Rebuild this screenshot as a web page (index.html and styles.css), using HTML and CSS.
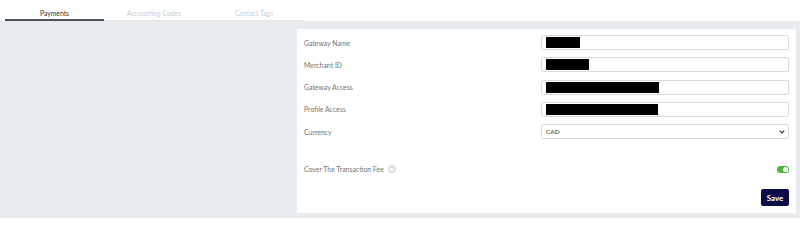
FILE: index.html
```html
<!DOCTYPE html>
<html lang="en">
<head>
  <meta charset="UTF-8">
  <meta name="viewport" content="width=device-width, initial-scale=1.0">
  <title>Payments</title>
  <link rel="stylesheet" href="styles.css">
</head>
<body>
  <!-- Tabs -->
  <div class="tabs">
    <div class="tab active">Payments</div>
    <div class="tab">Accounting Codes</div>
    <div class="tab">Contact Tags</div>
  </div>

  <!-- Content -->
  <div class="content">
    <div class="side"></div>
    <div class="card">
      <div class="row">
        <label>Gateway Name</label>
        <div class="field"><span class="redact r1"></span></div>
      </div>
      <div class="row">
        <label>Merchant ID</label>
        <div class="field"><span class="redact r2"></span></div>
      </div>
      <div class="row">
        <label>Gateway Access</label>
        <div class="field"><span class="redact r3"></span></div>
      </div>
      <div class="row">
        <label>Profile Access</label>
        <div class="field"><span class="redact r4"></span></div>
      </div>
      <div class="row">
        <label>Currency</label>
        <div class="field select">
          <span class="value">CAD</span>
          <svg class="chevron" width="6" height="4" viewBox="0 0 6 4"><path d="M0.7 0.7 L3 3 L5.3 0.7" fill="none" stroke="#333" stroke-width="1.2"/></svg>
        </div>
      </div>
      <div class="row toggle-row">
        <label>Cover The Transaction Fee
          <svg class="help" width="8" height="8" viewBox="0 0 8 8"><circle cx="4" cy="4" r="3.4" fill="none" stroke="#aaa" stroke-width="0.7"/><path d="M2.9 3.1 C2.9 2.3 5.1 2.3 5.1 3.1 C5.1 3.8 4 3.8 4 4.7" fill="none" stroke="#aaa" stroke-width="0.7"/><circle cx="4" cy="5.8" r="0.4" fill="#aaa"/></svg>
        </label>
        <div class="switch"><span class="knob"></span></div>
      </div>
      <div class="actions">
        <button class="save">Save</button>
      </div>
    </div>
  </div>
</body>
</html>
```

FILE: styles.css
```css
/* General */
body {
  margin: 0;
  font-family: 'Lato', 'Liberation Sans', sans-serif;
  background: #ffffff;
  color: #333;
  height: 226px;
  overflow: hidden;
}

/* Tabs */
.tabs {
  display: flex;
  width: 299px;
  margin-left: 5px;
  border-bottom: 1px solid #e3e5e8;
  height: 20px;
}

.tab {
  flex: 1;
  text-align: center;
  font-size: 6.8px;
  line-height: 26px;
  color: #c9cdd2;
}

.tab.active {
  color: #333;
  border-bottom: 2px solid #4b5158;
  margin-bottom: -1px;
  flex: 0 0 99px;
  box-sizing: border-box;
}

/* Content */
.content {
  display: flex;
  background: #e9ecef;
  padding: 8px 4px 5px 0;
  height: 184px;
}

.side {
  width: 297px;
  flex-shrink: 0;
}

.card {
  flex: 1;
  background: #ffffff;
  padding: 6px 7px 6px 7px;
  display: flex;
  flex-direction: column;
  gap: 7.3px;
}

.row {
  display: flex;
  align-items: center;
  height: 15px;
}

.row label {
  width: 237px;
  flex-shrink: 0;
  font-size: 6.9px;
  font-weight: 400;
  color: #747474;
  display: flex;
  align-items: center;
  gap: 4px;
}

.field {
  flex: 1;
  height: 15px;
  box-sizing: border-box;
  border: 1px solid #d9dcdf;
  border-radius: 2px;
  display: flex;
  align-items: center;
  padding-left: 4px;
}

.redact {
  display: block;
  height: 11px;
  background: #000;
}

.r1 { width: 34px; }
.r2 { width: 43px; }
.r3 { width: 113px; }
.r4 { width: 112px; }

.select {
  justify-content: space-between;
  padding-right: 3px;
}

.select .value {
  font-size: 6.5px;
  color: #333;
}

/* Toggle */
.toggle-row {
  margin-top: 15.5px;
  justify-content: space-between;
}

.switch {
  width: 12px;
  height: 7px;
  border-radius: 4px;
  background: #52b043;
  position: relative;
}

.knob {
  position: absolute;
  right: 1px;
  top: 1px;
  width: 5px;
  height: 5px;
  border-radius: 50%;
  background: #ffffff;
}

/* Save */
.actions {
  display: flex;
  justify-content: flex-end;
  margin-top: 5px;
}

.save {
  background: #0d0b46;
  color: #ffffff;
  border: none;
  border-radius: 2px;
  font-family: 'Lato', 'Liberation Sans', sans-serif;
  font-weight: 700;
  font-size: 8px;
  width: 28px;
  height: 17px;
  padding: 0;
}
```
